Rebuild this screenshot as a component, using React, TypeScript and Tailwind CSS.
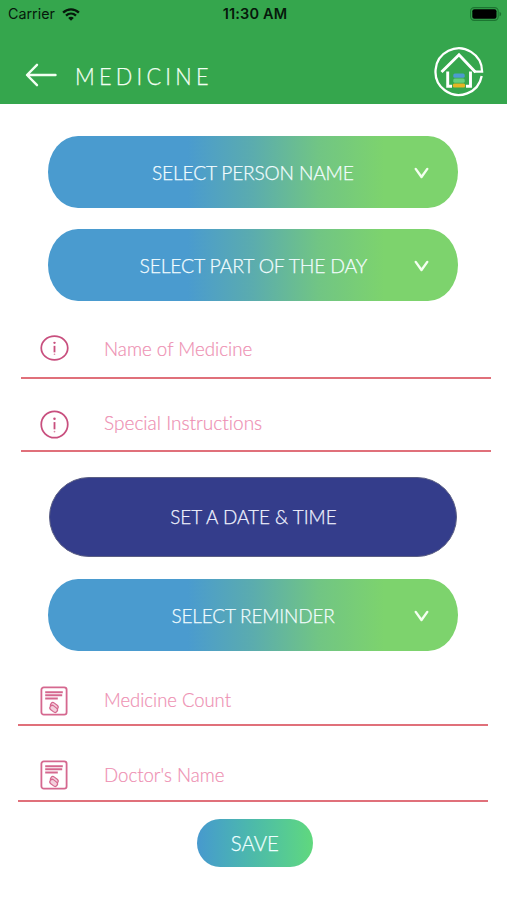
import type { ReactNode } from "react";

function WifiIcon() {
  return (
    <svg className="block h-[13px] w-[18px]" viewBox="0 0 18 13" fill="none" stroke="#06180b" strokeWidth="2.3">
      <path d="M1.1 4.6C5.6.2 12.4.2 16.9 4.6" />
      <path d="M4 7.6C6.9 4.9 11.1 4.9 14 7.6" />
      <path d="M6.2 9.9C7.8 8.4 10.2 8.4 11.8 9.9L9 12.7Z" fill="#06180b" stroke="none" />
    </svg>
  );
}

function BatteryIcon() {
  return (
    <svg className="block h-[14px] w-[32px]" viewBox="0 0 32 14">
      <rect x="0.6" y="0.6" width="27.6" height="12.8" rx="3.6" fill="none" stroke="#1c7531" strokeWidth="1.1" />
      <rect x="2.3" y="2.3" width="24.2" height="9.4" rx="2" fill="#000" />
      <path d="M29.5 4.7c2.2.8 2.2 3.8 0 4.6Z" fill="#1c7531" />
    </svg>
  );
}

function BackIcon() {
  return (
    <svg className="block h-6 w-[32px]" viewBox="0 0 32 24" fill="none" stroke="#f2fff2" strokeWidth="2.4" strokeLinecap="round" strokeLinejoin="round">
      <path d="M30.5 12H2.2M12 1.8L2 12L12 22.2" />
    </svg>
  );
}

function HomeLogo() {
  return (
    <svg className="block size-[50px]" viewBox="0 0 50 50" fill="none">
      <path
        d="M40 24.7H48.1A23.3 23.3 0 1 0 47.7 29"
        stroke="#fff"
        strokeWidth="2.3"
      />
      <path d="M7.5 25L25 7.8L41.5 25.2" stroke="#fff" strokeWidth="2.9" />
      <path d="M13.7 24.5V39.2H18M36.5 24.5V39.2H32" stroke="#fff" strokeWidth="2.9" />
      <rect x="19.3" y="26.5" width="11.4" height="4.3" rx="1.5" fill="#4d9bd0" />
      <rect x="19.3" y="31.5" width="11.4" height="4.3" rx="1.5" fill="#66cf7b" />
      <rect x="18.8" y="36.5" width="12.4" height="4" rx="1.5" fill="#e4b525" />
    </svg>
  );
}

function ChevronIcon() {
  return (
    <svg className="mt-[2px] -ml-px block h-3 w-4" viewBox="0 0 16 12" fill="none" stroke="#f4fff0" strokeWidth="2.4" strokeLinecap="round" strokeLinejoin="round">
      <path d="M2.7 1.9L8.5 10L14.3 1.9" />
    </svg>
  );
}

function InfoIcon({ className }: { className: string }) {
  return (
    <svg className={className} viewBox="0 0 30 30" preserveAspectRatio="none" fill="none" stroke="#c84f7e">
      <circle cx="15" cy="15" r="13.7" strokeWidth="1.8" />
      <path d="M15 12.5V20" strokeWidth="1.9" />
      <circle cx="15" cy="9" r="1.3" fill="#c84f7e" stroke="none" />
      <circle cx="15" cy="22.3" r="0.9" fill="#d987a5" stroke="none" />
    </svg>
  );
}

function PrescriptionIcon({ className }: { className: string }) {
  return (
    <svg className={className} viewBox="0 0 28 30" fill="none" stroke="#d5688f">
      <rect x="1.4" y="1.4" width="25.2" height="27.2" rx="2.4" strokeWidth="1.8" />
      <path d="M5.2 6.2H22.8M5.2 9.3H22.2M5.2 12.4H17.8" strokeWidth="2" />
      <g transform="rotate(38 14 21.5)" strokeWidth="1.2">
        <rect x="9.2" y="17.8" width="8.4" height="4.8" rx="2.4" fill="#f3cfdc" />
        <rect x="10.4" y="20.4" width="8.4" height="4.8" rx="2.4" fill="#f3cfdc" />
      </g>
    </svg>
  );
}

function SelectButton({ children, className }: { children: ReactNode; className: string }) {
  return (
    <button
      className={`${className} ml-12 grid h-[71.5px] w-[409.5px] shrink-0 grid-cols-[45px_1fr_44px] items-center rounded-[30px/36px] bg-linear-[90deg,#4a9bcf_0%,#4a9bcf_34%,#5bacae_50%,#71c584_66%,#7dd36d_82%,#7dd36d_100%] text-[20.5px] leading-6 text-[#f3fdff] [-webkit-text-stroke:0.25px_#f3fdff]`}
    >
      <span />
      <span className="text-center whitespace-nowrap">{children}</span>
      <ChevronIcon />
    </button>
  );
}

function Field({ icon, label, className, labelClass }: { icon: ReactNode; label: string; className: string; labelClass: string }) {
  return (
    <div className={`${className} flex w-[470px] shrink-0 flex-col`}>
      <div className="flex flex-1 items-start">
        {icon}
        <span className={`${labelClass} origin-left text-[20px] leading-6 whitespace-nowrap text-[#ee8fb2] [font-variant-ligatures:none] [-webkit-text-stroke:0.2px_#ee8fb2]`}>
          {label}
        </span>
      </div>
      <div className="h-[2px] shrink-0 bg-[#e0707a]" />
    </div>
  );
}

export default function App() {
  return (
    <div className="flex h-[900px] w-[507px] flex-col overflow-hidden bg-white font-['Lato',sans-serif] font-light">
      <header className="h-[104px] shrink-0 bg-[#35a64d]">
        <div className="grid h-7 grid-cols-[1fr_auto_1fr] items-center pr-[5px] pl-2 font-['Inter',sans-serif] text-[14px] leading-4 text-[#06180b]">
          <div className="flex items-center gap-[7px]">
            <span className="text-[14.3px] font-normal">Carrier</span>
            <WifiIcon />
          </div>
          <span className="text-[14.5px] font-semibold tracking-[0.15px]">11:30 AM</span>
          <div className="flex justify-end">
            <BatteryIcon />
          </div>
        </div>
        <div className="flex pt-[19px] pr-[23px] pl-[25px]">
          <div className="pt-4">
            <BackIcon />
          </div>
          <h1 className="ml-[18px] origin-left scale-x-[0.965] pt-[17.5px] text-[22.5px] leading-6 font-light tracking-[4.4px] text-[#f2fff2] [-webkit-text-stroke:0.25px_#f2fff2]">MEDICINE</h1>
          <div className="ml-auto">
            <HomeLogo />
          </div>
        </div>
      </header>

      <main className="flex flex-col">
        <SelectButton className="mt-8">
          <span className="inline-block scale-x-[0.935] tracking-[-0.2px]">SELECT PERSON NAME</span>
        </SelectButton>
        <SelectButton className="mt-[21.5px]">
          <span className="inline-block scale-x-[0.946] tracking-[-0.2px]">SELECT PART OF THE DAY</span>
        </SelectButton>

        <Field
          className="ml-[20.5px] mt-[28px] h-[50px]"
          icon={<InfoIcon className="mt-[6px] ml-[19px] block h-[26px] w-[29px]" />}
          label="Name of Medicine"
          labelClass="ml-[35px] mt-[7px] scale-x-[0.937]"
        />
        <Field
          className="ml-[20.5px] h-[73.5px]"
          icon={<InfoIcon className="mt-[31px] ml-[19px] block h-[29px] w-[29px]" />}
          label="Special Instructions"
          labelClass="ml-[35px] mt-[31px] scale-x-[0.952]"
        />

        <button className="mt-[25px] ml-[49px] flex h-[79.5px] w-[407.5px] shrink-0 items-center justify-center rounded-[40px] border border-[#5b5f84] bg-[#343d8b] text-[20.5px] leading-6 text-[#f1f3ff] [-webkit-text-stroke:0.25px_#f1f3ff]">
          <span className="mb-[2px] ml-[2px] scale-x-[0.92]">SET A DATE &amp; TIME</span>
        </button>
        <SelectButton className="mt-[22.5px]">
          <span className="inline-block scale-x-[0.926] tracking-[-0.2px]">SELECT REMINDER</span>
        </SelectButton>

        <Field
          className="ml-[17.5px] h-[75.5px]"
          icon={<PrescriptionIcon className="mt-[35px] ml-[22.5px] block h-[30px] w-[28px]" />}
          label="Medicine Count"
          labelClass="ml-[36px] mt-[36.5px] scale-x-[0.922]"
        />
        <Field
          className="ml-[17.5px] h-[76px]"
          icon={<PrescriptionIcon className="mt-[34px] ml-[22.5px] block h-[30px] w-[28px]" />}
          label="Doctor's Name"
          labelClass="ml-[36px] mt-[35.5px] scale-x-[0.93]"
        />

        <button className="mt-[17px] ml-[196.5px] flex h-[48px] w-[116px] shrink-0 items-center justify-center rounded-[23px/24px] bg-linear-to-r from-[#4799ce] via-[#4dbba8] to-[#60d87d] text-[21px] leading-6 text-[#efffff] [-webkit-text-stroke:0.25px_#efffff]">
          <span className="scale-x-[0.97]">SAVE</span>
        </button>
      </main>
    </div>
  );
}
